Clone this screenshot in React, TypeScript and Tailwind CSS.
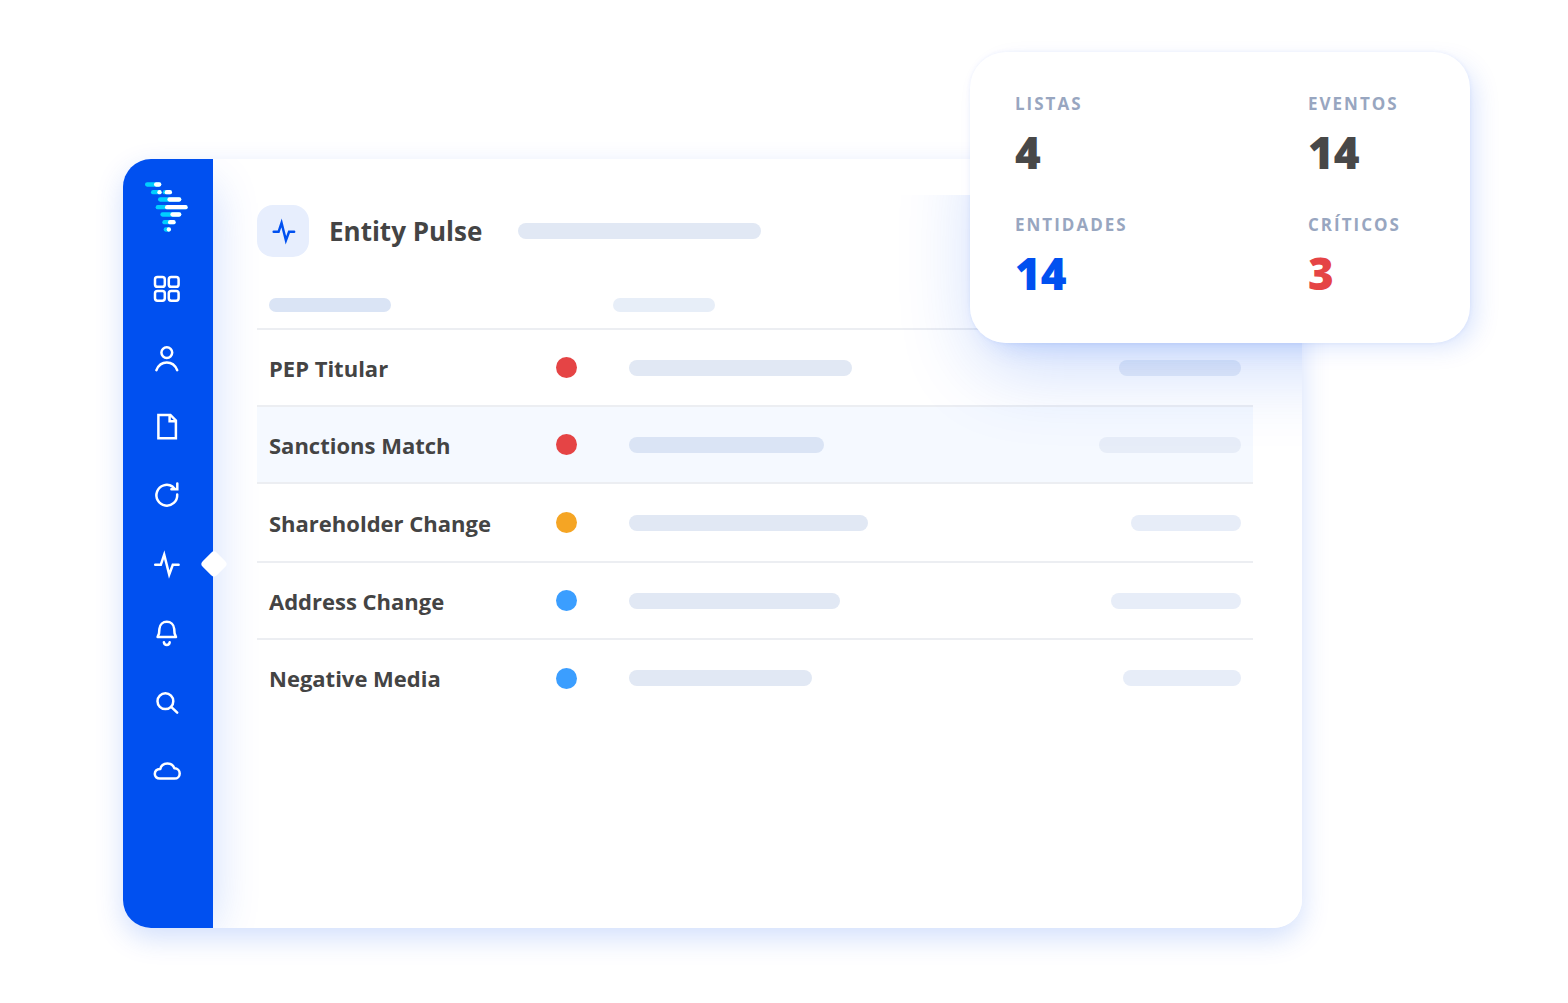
import type { ReactNode } from "react";

const PULSE = "M4.2 15.8H9.8L13.2 5.6L18.2 25.6L21.8 15.8H27.6";

type NavItem = { label: string; active?: boolean; icon: ReactNode };

const navItems: NavItem[] = [
  {
    label: "Dashboard",
    icon: (
      <>
        <rect x="4" y="4" width="9.8" height="9.8" rx="2.4" />
        <rect x="17.8" y="4" width="9.8" height="9.8" rx="2.4" />
        <rect x="4" y="17.9" width="9.8" height="9.8" rx="2.4" />
        <rect x="17.8" y="17.9" width="9.8" height="9.8" rx="2.4" />
      </>
    ),
  },
  {
    label: "People",
    icon: (
      <>
        <circle cx="15.8" cy="10.6" r="5.4" />
        <path d="M5.4 28.2C7.3 23.6 11 20.6 15.8 20.6S24.3 23.6 26.2 28.2" />
      </>
    ),
  },
  {
    label: "Documents",
    icon: (
      <path
        d="M7.4 3.9H19.4L24.9 9.4V27.2H7.4ZM18.6 3.9V10.2H24.9"
        strokeLinejoin="miter"
        strokeLinecap="butt"
      />
    ),
  },
  {
    label: "Refresh",
    icon: <path d="M26.2 14.6A10.4 10.4 0 1 1 21.6 6.6L24 9.1M26.3 3.4V9.2H20.4" strokeLinejoin="miter" />,
  },
  { label: "Entity Pulse", active: true, icon: <path d={PULSE} strokeLinejoin="miter" /> },
  {
    label: "Notifications",
    icon: (
      <>
        <path d="M6.6 19L8 15.6L8.4 10.9C8.8 6.5 12 3.8 15.8 3.8S22.8 6.5 23.2 10.9L23.6 15.6L25 19Z" />
        <path d="M12.9 24.2C13.2 26.1 14.4 26.9 15.8 26.9S18.4 26.1 18.7 24.2" />
      </>
    ),
  },
  {
    label: "Search",
    icon: (
      <>
        <circle cx="14.4" cy="14.2" r="7.9" />
        <path d="M20.2 19.9L26.2 25.6" />
      </>
    ),
  },
  {
    label: "Cloud",
    icon: (
      <path d="M8.8 22.6C5.8 22.6 3.8 20.5 3.8 18C3.8 15.2 6 13.2 9.3 13C10 9.5 13 7.4 16.4 7.4C19.8 7.4 22.4 9.2 23.3 12.2C26.5 12.3 28.7 14.6 28.7 17.4C28.7 20.4 26.5 22.6 23.5 22.6Z" />
    ),
  },
];

const logoBars = [
  { y: 1, x: 0, end: 49, white: 27 },
  { y: 24, x: 18, end: 50, white: 37 },
  { y: 24, x: 53, end: 81, white: 59 },
  { y: 46, x: 39, end: 109, white: 67 },
  { y: 69, x: 32, end: 128, white: 60 },
  { y: 91, x: 46, end: 109, white: 76 },
  { y: 114, x: 52, end: 92, white: 69 },
  { y: 136, x: 56, end: 78, white: 65 },
];

function Logo() {
  return (
    <svg viewBox="0 0 129 150" className="h-[50px] w-[43px]" role="img" aria-label="Logo">
      {logoBars.map((b) => (
        <g key={`${b.x}-${b.y}`}>
          <rect x={b.x} y={b.y} width={b.end - b.x} height="13" rx="6.5" fill="#00cfff" />
          <rect x={b.white} y={b.y} width={b.end - b.white} height="13" rx="6.5" fill="#fff" />
        </g>
      ))}
    </svg>
  );
}

const rows = [
  { name: "PEP Titular", dot: "bg-[#e54445]", bar: "w-[223px] bg-[#e1e8f4]", end: "w-[122px] bg-[#e7edf8]", row: "h-[77px]" },
  { name: "Sanctions Match", dot: "bg-[#e54445]", bar: "w-[195px] bg-[#dae4f5]", end: "w-[142px] bg-[#e7edf8]", row: "h-[77px] bg-[#f5f9ff]" },
  { name: "Shareholder Change", dot: "bg-[#f5a524]", bar: "w-[239px] bg-[#e1e8f4]", end: "w-[110px] bg-[#e7edf8]", row: "h-[79px]" },
  { name: "Address Change", dot: "bg-[#3b9eff]", bar: "w-[211px] bg-[#e1e8f4]", end: "w-[130px] bg-[#e7edf8]", row: "h-[77px]" },
  { name: "Negative Media", dot: "bg-[#3b9eff]", bar: "w-[183px] bg-[#e1e8f4]", end: "w-[118px] bg-[#e7edf8]", row: "h-[77px]" },
];

const stats = [
  { label: "LISTAS", value: "4", color: "text-[#484848]" },
  { label: "EVENTOS", value: "14", color: "text-[#484848]" },
  { label: "ENTIDADES", value: "14", color: "text-[#0050f0]" },
  { label: "CRÍTICOS", value: "3", color: "text-[#e54445]" },
];

function Sidebar() {
  return (
    <nav
      aria-label="Main"
      className="flex w-[90px] shrink-0 flex-col gap-[41px] bg-[#0050f0] pt-[23px] shadow-[14px_14px_48px_-14px_rgba(0,80,240,0.2)]"
    >
      <div className="flex justify-center pr-1">
        <Logo />
      </div>
      <ul className="flex flex-col gap-[37px]">
        {navItems.map((item) => (
          <li key={item.label} className="relative flex justify-center pr-0.5">
            <button type="button" aria-label={item.label} className="size-8">
              <svg
                viewBox="0 0 32 32"
                className="size-8"
                fill="none"
                stroke="#fff"
                strokeWidth="2.5"
                strokeLinecap="round"
                strokeLinejoin="round"
              >
                {item.icon}
              </svg>
            </button>
            {item.active && (
              <span className="absolute top-[5px] -right-[11px] size-5 rotate-45 rounded-[4px] bg-white" />
            )}
          </li>
        ))}
      </ul>
    </nav>
  );
}

function EventsTable() {
  return (
    <table className="relative mt-[41px] w-full table-fixed border-collapse text-left">
      <colgroup>
        <col className="w-[299px]" />
        <col className="w-[57px]" />
        <col />
        <col className="w-[200px]" />
      </colgroup>
      <thead>
        <tr className="border-b-2 border-[#eceef2]">
          <th className="pb-4 pl-3" aria-label="Event">
            <div className="h-[14px] w-[122px] rounded-full bg-[#dae4f5]" />
          </th>
          <th aria-label="Severity" />
          <th className="pb-4" aria-label="Detail">
            <div className="h-[14px] w-[102px] rounded-full bg-[#e7eef8]" />
          </th>
          <th aria-label="Date" />
        </tr>
      </thead>
      <tbody>
        {rows.map((r) => (
          <tr key={r.name} className={`border-b-2 border-[#eceef2] last:border-0 ${r.row}`}>
            <td className="pl-3 text-[22px] leading-8 font-bold whitespace-nowrap text-[#444]">{r.name}</td>
            <td>
              <div className={`size-[21px] rounded-full ${r.dot}`} />
            </td>
            <td className="pl-4">
              <div className={`h-4 rounded-full ${r.bar}`} />
            </td>
            <td className="pr-3">
              <div className={`ml-auto h-4 rounded-full ${r.end}`} />
            </td>
          </tr>
        ))}
      </tbody>
    </table>
  );
}

function StatsCard() {
  return (
    <dl className="absolute -top-[107px] -right-[168px] grid w-[500px] grid-cols-[293px_1fr] gap-y-[35px] rounded-[36px] bg-white pt-10 pb-[44px] pl-[45px] shadow-[10px_8px_26px_-6px_rgba(0,80,240,0.17),0_0_4px_rgba(0,80,240,0.08)]">
      {stats.map((s) => (
        <div key={s.label} className="flex flex-col gap-[10px]">
          <dt className="text-[17px] leading-6 font-bold tracking-[2px] text-[#98a6c0]">{s.label}</dt>
          <dd className={`text-[44px] leading-[52px] font-extrabold ${s.color}`}>{s.value}</dd>
        </div>
      ))}
    </dl>
  );
}

export default function App() {
  return (
    <main className="min-h-screen bg-white pt-[159px] pr-[266px] pb-[75px] pl-[123px] font-['Open_Sans','Noto_Sans',sans-serif]">
      <div className="relative">
        <div className="rounded-[28px] shadow-[0_10px_28px_rgba(0,80,240,0.18)]">
          <div className="flex min-h-[769px] overflow-hidden rounded-[28px] bg-white">
            <Sidebar />
            <section className="min-w-0 flex-1 pt-[46px] pr-[49px] pl-11">
              <header className="flex items-center">
                <div className="flex size-[52px] items-center justify-center rounded-[16px] bg-[#e7eefd] pt-0.5 pl-0.5">
                  <svg
                    viewBox="0 0 32 32"
                    className="size-7"
                    fill="none"
                    stroke="#0050f0"
                    strokeWidth="2.8"
                    strokeLinecap="round"
                    aria-hidden="true"
                  >
                    <path d={PULSE} />
                  </svg>
                </div>
                <h1 className="w-[209px] shrink-0 pl-5 text-[26px] leading-9 font-bold whitespace-nowrap text-[#444]">
                  Entity Pulse
                </h1>
                <div className="h-4 w-[243px] rounded-full bg-[#e1e8f4]" />
              </header>
              <EventsTable />
            </section>
          </div>
        </div>
        <div className="pointer-events-none absolute inset-x-0 top-9 bottom-9 overflow-hidden">
          <div className="absolute -top-[80px] -right-[168px] h-[228px] w-[500px] rounded-[36px] shadow-[6px_26px_80px_rgba(0,80,240,0.2)]" />
        </div>
        <StatsCard />
      </div>
    </main>
  );
}
